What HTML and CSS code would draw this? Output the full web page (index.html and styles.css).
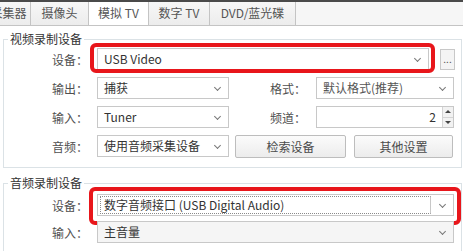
FILE: index.html
```html
<!DOCTYPE html>
<html lang="zh-CN">
<head>
    <meta charset="UTF-8">
    <title>模拟 TV</title>
    <link rel="stylesheet" href="styles.css">
</head>
<body>
<div class="tabs">
    <div class="tab tab-cut">采集器</div>
    <div class="tab tab-cam">摄像头</div>
    <div class="tab tab-atv active">模拟 TV</div>
    <div class="tab tab-dtv">数字 TV</div>
    <div class="tab tab-dvd">DVD/蓝光碟</div>
</div>

<!-- 视频 -->
<fieldset class="group group-video">
    <legend>视频录制设备</legend>
    <div class="row">
        <label class="lbl">设备：</label>
        <div class="mark mark-video">
            <div class="combo combo-dev">USB Video<i class="arrow"></i></div>
        </div>
        <button class="more">...</button>
    </div>
    <div class="row">
        <label class="lbl">输出：</label>
        <div class="combo combo-half">捕获<i class="arrow"></i></div>
        <label class="lbl lbl-r">格式：</label>
        <div class="combo combo-right">默认格式(推荐)<i class="arrow"></i></div>
    </div>
    <div class="row">
        <label class="lbl">输入：</label>
        <div class="combo combo-half">Tuner<i class="arrow"></i></div>
        <label class="lbl lbl-r">频道：</label>
        <div class="spin">
            <span class="spin-val">2</span>
            <span class="spin-btns">
                <i class="up"></i>
                <i class="down"></i>
            </span>
        </div>
    </div>
    <div class="row">
        <label class="lbl">音频：</label>
        <div class="combo combo-half">使用音频采集设备<i class="arrow"></i></div>
        <button class="btn btn-search">检索设备</button>
        <button class="btn btn-other">其他设置</button>
    </div>
</fieldset>

<!-- 音频 -->
<fieldset class="group group-audio">
    <legend>音频录制设备</legend>
    <div class="row">
        <label class="lbl">设备：</label>
        <div class="mark mark-audio">
            <div class="combo combo-full combo-focus">
                <span class="focus">数字音频接口 (USB Digital Audio)</span><i class="arrow"></i>
            </div>
        </div>
    </div>
    <div class="row">
        <label class="lbl">输入：</label>
        <div class="combo combo-full combo-grey">主音量<i class="arrow"></i></div>
    </div>
    <div class="row">
        <label class="lbl"></label>
        <span class="check"></span>
        <span class="check-text">录制时同时采集视频和音频信号</span>
    </div>
</fieldset>
</body>
</html>
```

FILE: styles.css
```css
html,
body {
    margin: 0;
    padding: 0;
}

body {
    width: 463px;
    height: 251px;
    overflow: hidden;
    background: #ffffff;
    font-family: "Noto Sans CJK SC", "Noto Sans", sans-serif;
    font-size: 12px;
    color: #3c3c3c;
}

/* 顶部选项卡 */
.tabs {
    display: flex;
    height: 23px;
    border-top: 2px solid #4a4a4a;
    border-bottom: 1px solid #c4c4c4;
    background: #f6f6f6;
    overflow: hidden;
}

.tab {
    box-sizing: border-box;
    height: 23px;
    line-height: 22px;
    text-align: center;
    color: #555;
    border-right: 1px solid #c4c4c4;
    background: linear-gradient(#f7f7f7, #ececec);
    flex-shrink: 0;
}

.tab-cut {
    width: 44px;
    margin-left: -13px;
}

.tab-cam {
    width: 58px;
}

.tab-atv {
    width: 60px;
}

.tab-dtv {
    width: 61px;
}

.tab-dvd {
    width: 86px;
}

.tab.active {
    background: #ffffff;
    height: 24px;
    margin-bottom: -1px;
}

/* 分组框 */
.group {
    margin: 5px 1px 0 3px;
    padding: 1px 0 10px 0;
    border: 1px solid #dbe2e6;
    min-width: 0;
}

.group legend {
    margin-left: 4px;
    padding: 0 2px;
    line-height: 16px;
    color: #333;
}

.group-audio {
    margin-top: 7px;
    padding: 3px 0 0 0;
    border-bottom: none;
}

.row {
    display: flex;
    align-items: center;
    height: 22px;
    margin-bottom: 7px;
}

.row:last-child {
    margin-bottom: 0;
}

.group-audio .row {
    margin-bottom: 5px;
}

.lbl {
    width: 84px;
    margin-right: 9px;
    text-align: right;
    color: #505050;
    flex-shrink: 0;
}

.lbl-r {
    width: 77px;
    margin-right: 10px;
}

/* 下拉框 */
.combo {
    position: relative;
    box-sizing: border-box;
    height: 22px;
    line-height: 20px;
    padding-left: 6px;
    border: 1px solid #c8c8c8;
    background: #ffffff;
    color: #333;
    white-space: nowrap;
}

.arrow {
    position: absolute;
    right: 8px;
    top: 7px;
    width: 4px;
    height: 4px;
    border-right: 1px solid #777;
    border-bottom: 1px solid #777;
    transform: rotate(45deg);
}

.combo-dev {
    width: 332px;
}

.combo-half {
    width: 132px;
}

.combo-right {
    width: 138px;
    color: #555;
}

.combo-full {
    width: 357px;
}

.combo-grey {
    background: #f5f5f5;
}

.combo-focus {
    padding-left: 2px;
    padding-top: 1px;
}

.focus {
    display: inline-block;
    box-sizing: border-box;
    width: 331px;
    height: 18px;
    line-height: 16px;
    padding-left: 3px;
    border: 1px dotted #8a8a8a;
    border-right: 1px solid #c8c8c8;
    vertical-align: top;
}

.more {
    box-sizing: border-box;
    width: 15px;
    height: 21px;
    margin-left: 11px;
    padding: 0;
    border: 1px solid #c8c8c8;
    background: #f4f4f4;
    font-family: inherit;
    font-size: 10px;
    line-height: 14px;
    color: #555;
}

/* 数字框 */
.spin {
    display: flex;
    box-sizing: border-box;
    width: 138px;
    height: 22px;
    border: 1px solid #c8c8c8;
    background: #fff;
}

.spin-val {
    flex: 1;
    text-align: right;
    line-height: 20px;
    padding-right: 6px;
    color: #333;
}

.spin-btns {
    display: flex;
    flex-direction: column;
    width: 10px;
    border-left: 1px solid #d4d4d4;
}

.spin-btns i {
    flex: 1;
    position: relative;
    background: #f2f2f2;
}

.spin-btns i + i {
    border-top: 1px solid #d4d4d4;
}

.spin-btns i::after {
    content: "";
    position: absolute;
    left: 2px;
    top: 3px;
    border-left: 3px solid transparent;
    border-right: 3px solid transparent;
}

.spin-btns .up::after {
    border-bottom: 3px solid #444;
}

.spin-btns .down::after {
    border-top: 3px solid #444;
}

/* 按钮 */
.btn {
    box-sizing: border-box;
    height: 23px;
    padding: 0;
    border: 1px solid #bdbdbd;
    border-radius: 2px;
    background: linear-gradient(#fbfbfb, #ececec);
    font-family: inherit;
    font-size: 12px;
    color: #4a4a4a;
}

.btn-search {
    width: 111px;
    margin-left: 6px;
}

.btn-other {
    width: 99px;
    margin-left: 8px;
}

.check {
    box-sizing: border-box;
    width: 12px;
    height: 12px;
    margin: 0 6px 0 3px;
    border: 1px solid #999;
}

.check-text {
    color: #555;
}

/* 红色标注框 */
.mark {
    position: relative;
}

.mark::after {
    content: "";
    position: absolute;
    border: 4px solid #e8161b;
    border-radius: 6px;
    pointer-events: none;
}

.mark-video::after {
    top: -5px;
    bottom: -3px;
    left: -7px;
    right: -6px;
}

.mark-audio::after {
    top: -7px;
    bottom: -9px;
    left: -8px;
    right: -7px;
}
```
